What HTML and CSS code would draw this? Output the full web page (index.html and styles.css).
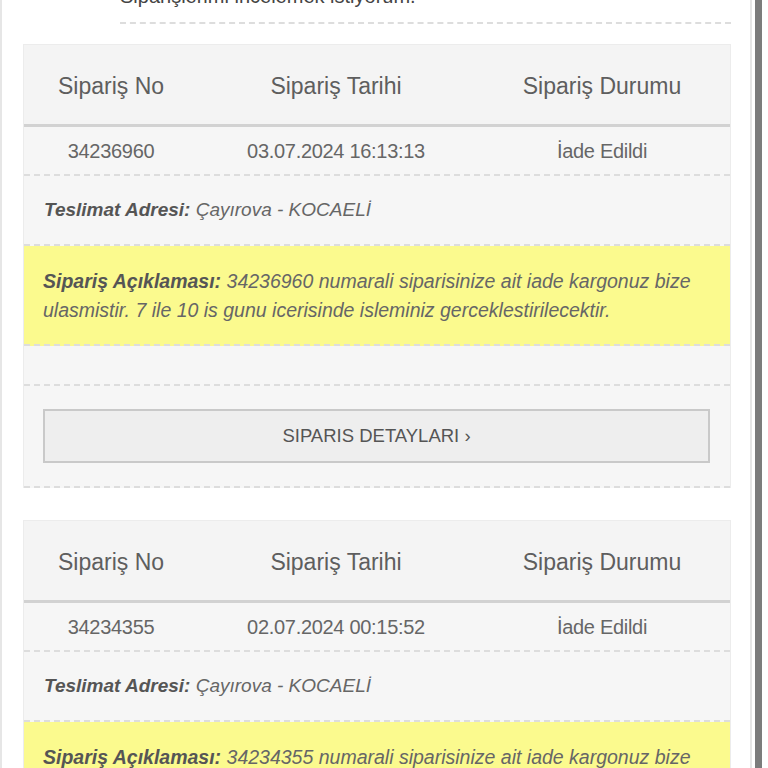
FILE: index.html
```html
<!DOCTYPE html>
<html>
  <head>
    <title>Siparişlerim</title>
    <link rel="stylesheet" href="styles.css">
  </head>
  <body>
    <div class="shell">
      <div class="scroll-bar">
        <div class="page">
          <div class="intro">Siparişlerimi incelemek istiyorum.</div>

          <div class="order-card">
            <div class="order-head">
              <div>Sipariş No</div>
              <div>Sipariş Tarihi</div>
              <div>Sipariş Durumu</div>
            </div>
            <div class="order-row">
              <div>34236960</div>
              <div>03.07.2024 16:13:13</div>
              <div>İade Edildi</div>
            </div>
            <div class="order-address">
              <span><b>Teslimat Adresi:</b> Çayırova - KOCAELİ</span>
            </div>
            <div class="order-note">
              <b>Sipariş Açıklaması:</b> 34236960 numarali siparisinize ait iade kargonuz bize ulasmistir. 7 ile 10 is gunu icerisinde isleminiz gerceklestirilecektir.
            </div>
            <div class="order-spacer"></div>
            <div class="order-actions">
              <button type="button" class="btn">SIPARIS DETAYLARI ›</button>
            </div>
          </div>

          <div class="order-card">
            <div class="order-head">
              <div>Sipariş No</div>
              <div>Sipariş Tarihi</div>
              <div>Sipariş Durumu</div>
            </div>
            <div class="order-row">
              <div>34234355</div>
              <div>02.07.2024 00:15:52</div>
              <div>İade Edildi</div>
            </div>
            <div class="order-address">
              <span><b>Teslimat Adresi:</b> Çayırova - KOCAELİ</span>
            </div>
            <div class="order-note">
              <b>Sipariş Açıklaması:</b> 34234355 numarali siparisinize ait iade kargonuz bize ulasmistir. 7 ile 10 is gunu icerisinde isleminiz gerceklestirilecektir.
            </div>
            <div class="order-spacer"></div>
            <div class="order-actions">
              <button type="button" class="btn">SIPARIS DETAYLARI ›</button>
            </div>
          </div>
        </div>
      </div>
    </div>
  </body>
</html>
```

FILE: styles.css
```css
body {
  margin: 0;
  background: #fff;
  font-family: "Liberation Sans", Arial, sans-serif;
  color: #666;
  overflow: hidden;
}

.shell {
  padding-right: 6px;
}

.scroll-bar {
  border-right: 7px solid #7c7c7c;
  padding-right: 3px;
}

.page {
  border-left: 2px solid #e6e6e6;
  border-right: 2px solid #e6e6e6;
  padding: 0 19px 0 21px;
  height: 768px;
  overflow: hidden;
}

.intro {
  margin: -16px 0 0 97px;
  padding-bottom: 14px;
  font-size: 20px;
  line-height: 24px;
  color: #444;
  border-bottom: 2px dashed #ddd;
}

.order-card {
  margin-top: 20px;
  background: #f6f6f6;
  border: 1px solid #ececec;
  border-bottom: none;
}

.order-card + .order-card {
  margin-top: 32px;
}

.order-head,
.order-row {
  display: grid;
  grid-template-columns: 174px 276px 1fr;
  text-align: center;
}

.order-head {
  height: 76px;
  padding-top: 3px;
  align-items: center;
  font-size: 23px;
  color: #5e5e5e;
  background: #f4f4f4;
  border-bottom: 3px solid #d2d2d2;
}

.order-row {
  height: 46px;
  padding-top: 1px;
  align-items: center;
  font-size: 20px;
  letter-spacing: -0.3px;
  border-bottom: 2px dashed #ddd;
}

.order-address {
  height: 68px;
  display: flex;
  align-items: center;
  padding-left: 20px;
  font-size: 19px;
  font-style: italic;
  border-bottom: 2px dashed #ddd;
}

.order-address b,
.order-note b {
  color: #555;
}

.order-note {
  background: #fbfa8e;
  padding: 21px 20px 19px 19px;
  font-size: 19.5px;
  line-height: 29px;
  font-style: italic;
  border-bottom: 2px dashed #ddd;
}

.order-spacer {
  height: 38px;
  border-bottom: 2px dashed #ddd;
}

.order-actions {
  padding: 23px 20px 23px 19px;
  border-bottom: 2px dashed #ddd;
}

.btn {
  display: block;
  width: 100%;
  height: 54px;
  background: #eeeeee;
  border: 2px solid #c9c9c9;
  color: #555;
  font-family: inherit;
  font-size: 18.5px;
  text-align: center;
  cursor: pointer;
}
```
